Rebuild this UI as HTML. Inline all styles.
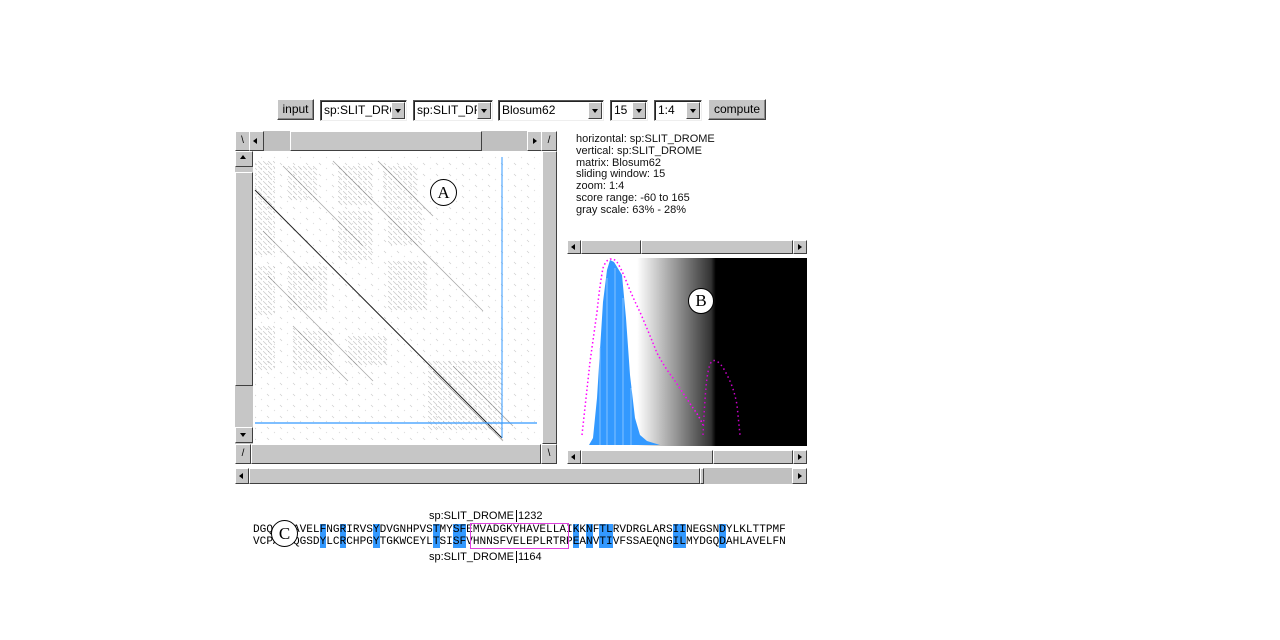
<!DOCTYPE html>
<html><head><meta charset="utf-8"><style>
*{box-sizing:border-box;margin:0;padding:0}
body{width:1280px;height:640px;background:#fff;position:relative;overflow:hidden;font-family:"Liberation Sans",sans-serif;font-size:11px;color:#000}
.a{position:absolute}
.btn{position:absolute;background:#c6c6c6;border:1px solid;border-color:#fff #404040 #404040 #fff;box-shadow:inset -1px -1px 0 #888;font-size:12px;text-align:center;line-height:18px;height:21px}
.sel{position:absolute;height:21px;background:#fff;border:1px solid;border-color:#555 #eee #eee #555;box-shadow:inset 1px 1px 0 #222;font-size:12px;line-height:18px;padding-left:3px;overflow:hidden;white-space:nowrap}
.sel i{position:absolute;right:1px;top:1px;width:14px;height:17px;background:#c6c6c6;border:1px solid;border-color:#fff #404040 #404040 #fff}
.sel i:after{content:"";position:absolute;left:3px;top:6px;border:3.5px solid transparent;border-top:4px solid #000}
.g{position:absolute;background:#c6c6c6;border:1px solid;border-color:#fff #404040 #404040 #fff}
.tr{position:absolute;background:#c6c6c6}
.lbl{position:absolute;font-size:11px;line-height:11px}
.seq{position:absolute;font-family:"Liberation Mono",monospace;font-size:11.1px;line-height:12px;white-space:pre;letter-spacing:0}
.h{background:#3399ff}
.info{position:absolute;left:576px;top:134px;font-size:11px;line-height:11.8px;color:#111}
.circ{position:absolute;border:1px solid #000;border-radius:50%;background:#fff;font-family:"Liberation Serif",serif;font-size:17px;text-align:center}
.ar{position:absolute;width:0;height:0;border:3px solid transparent}
</style></head><body>

<div class="btn" style="left:277px;top:99px;width:37px">input</div>
<div class="sel" style="left:320px;top:100px;width:87px">sp:SLIT_DRO<i></i></div>
<div class="sel" style="left:413px;top:100px;width:80px">sp:SLIT_DR<i></i></div>
<div class="sel" style="left:498px;top:100px;width:106px">Blosum62<i></i></div>
<div class="sel" style="left:610px;top:100px;width:38px">15<i></i></div>
<div class="sel" style="left:654px;top:100px;width:48px">1:4<i></i></div>
<div class="btn" style="left:708px;top:99px;width:58px">compute</div>

<!-- dotplot panel -->
<div class="tr" style="left:235px;top:131px;width:322px;height:333px"></div>
<div class="g" style="left:235px;top:131px;width:15px;height:20px;font-size:10px;text-align:center;line-height:17px">\</div>
<div class="g" style="left:249px;top:131px;width:15px;height:20px"></div><div class="ar" style="left:253px;top:138px;border-right:4px solid #000;border-left:0"></div>
<div class="tr" style="left:264px;top:131px;width:264px;height:20px;background:#c0c0c0"></div>
<div class="g" style="left:290px;top:131px;width:192px;height:20px"></div>
<div class="g" style="left:527px;top:131px;width:15px;height:20px"></div><div class="ar" style="left:533px;top:138px;border-left:4px solid #000;border-right:0"></div>
<div class="g" style="left:541px;top:131px;width:16px;height:20px;font-size:10px;text-align:center;line-height:17px">/</div>
<div class="g" style="left:235px;top:151px;width:18px;height:16px"></div><div class="ar" style="left:240px;top:155px;border-bottom:4px solid #000;border-top:0"></div>
<div class="g" style="left:235px;top:172px;width:18px;height:214px"></div>
<div class="g" style="left:235px;top:427px;width:18px;height:16px"></div><div class="ar" style="left:240px;top:433px;border-top:4px solid #000;border-bottom:0"></div>
<div class="g" style="left:542px;top:151px;width:15px;height:293px"></div>
<div class="g" style="left:235px;top:444px;width:16px;height:20px;font-size:10px;text-align:center;line-height:17px">/</div>
<div class="g" style="left:251px;top:444px;width:290px;height:20px"></div>
<div class="g" style="left:541px;top:444px;width:16px;height:20px;font-size:10px;text-align:center;line-height:17px">\</div>

<svg class="a" style="left:253px;top:151px" width="289" height="293">
<defs>
<pattern id="p" width="5" height="5" patternUnits="userSpaceOnUse"><line x1="0" y1="0" x2="4" y2="4" stroke="#888" stroke-width="0.7"/></pattern>
<pattern id="q" width="13" height="11" patternUnits="userSpaceOnUse"><line x1="1" y1="1" x2="3" y2="3" stroke="#ccc" stroke-width="0.6"/><line x1="8" y1="6" x2="9" y2="7" stroke="#d4d4d4" stroke-width="0.6"/></pattern>
</defs>
<rect width="289" height="293" fill="#fff"/>
<rect x="2" y="4" width="285" height="285" fill="url(#q)"/>
<g fill="url(#p)" opacity="0.45">
<rect x="2" y="10" width="20" height="45"/><rect x="35" y="15" width="30" height="35"/><rect x="85" y="15" width="35" height="40"/><rect x="130" y="15" width="35" height="40"/>
<rect x="2" y="55" width="20" height="50"/><rect x="85" y="60" width="35" height="50"/><rect x="135" y="55" width="35" height="40"/>
<rect x="2" y="115" width="20" height="50"/><rect x="35" y="115" width="40" height="45"/><rect x="135" y="110" width="40" height="50"/>
<rect x="2" y="175" width="20" height="45"/><rect x="40" y="180" width="40" height="40"/><rect x="95" y="185" width="40" height="30"/>
<rect x="175" y="210" width="75" height="70"/>
</g>
<g stroke="#555" stroke-width="0.8" opacity="0.5">
<line x1="30" y1="15" x2="110" y2="95"/><line x1="80" y1="10" x2="230" y2="160"/><line x1="125" y1="10" x2="180" y2="65"/>
<line x1="10" y1="80" x2="60" y2="130"/><line x1="15" y1="125" x2="120" y2="230"/><line x1="40" y1="175" x2="95" y2="230"/>
<line x1="180" y1="220" x2="250" y2="290"/><line x1="200" y1="215" x2="260" y2="275"/>
</g>
<line x1="2" y1="39" x2="249" y2="287" stroke="#222" stroke-width="1"/>
<line x1="249" y1="6" x2="249" y2="287" stroke="#3399ff" stroke-width="1"/>
<line x1="2" y1="272" x2="284" y2="272" stroke="#3399ff" stroke-width="1.2"/>
</svg>
<div class="circ" style="left:430px;top:179px;width:27px;height:27px;line-height:25px">A</div>

<!-- bottom scroll -->
<div class="tr" style="left:235px;top:468px;width:572px;height:16px;background:#c0c0c0"></div>
<div class="g" style="left:235px;top:468px;width:14px;height:16px"></div><div class="ar" style="left:239px;top:473px;border-right:4px solid #000;border-left:0"></div>
<div class="g" style="left:249px;top:468px;width:451px;height:16px"></div>
<div class="g" style="left:700px;top:468px;width:4px;height:16px"></div>
<div class="g" style="left:792px;top:468px;width:15px;height:16px"></div><div class="ar" style="left:798px;top:473px;border-left:4px solid #000;border-right:0"></div>

<div class="info">horizontal: sp:SLIT_DROME<br>vertical: sp:SLIT_DROME<br>matrix: Blosum62<br>sliding window: 15<br>zoom: 1:4<br>score range: -60 to 165<br>gray scale: 63% - 28%</div>

<!-- histogram scroll top -->
<div class="tr" style="left:567px;top:240px;width:240px;height:14px;background:#c0c0c0"></div>
<div class="g" style="left:567px;top:240px;width:14px;height:14px"></div><div class="ar" style="left:571px;top:244px;border-right:4px solid #000;border-left:0"></div>
<div class="g" style="left:581px;top:240px;width:60px;height:14px"></div>
<div class="g" style="left:641px;top:240px;width:152px;height:14px"></div>
<div class="g" style="left:793px;top:240px;width:14px;height:14px"></div><div class="ar" style="left:798px;top:244px;border-left:4px solid #000;border-right:0"></div>

<svg class="a" style="left:567px;top:258px" width="240" height="188">
<defs><linearGradient id="gr" x1="0" x2="1"><stop offset="0" stop-color="#fff"/><stop offset="0.292" stop-color="#fff"/><stop offset="0.45" stop-color="#999"/><stop offset="0.6" stop-color="#333"/><stop offset="0.62" stop-color="#000"/><stop offset="1" stop-color="#000"/></linearGradient></defs>
<rect width="240" height="188" fill="url(#gr)"/>
<path d="M22 187 L26 180 L30 140 L36 44 L40 12 L43 2 L47 4 L55 17 L59 60 L63 117 L68 160 L73 177 L80 183 L93 187 Z" fill="#3399ff"/>
<g stroke="#9cf" stroke-width="0.8"><line x1="33" y1="90" x2="33" y2="187"/><line x1="40" y1="20" x2="40" y2="187"/><line x1="48" y1="10" x2="48" y2="187"/><line x1="56" y1="40" x2="56" y2="187"/><line x1="64" y1="130" x2="64" y2="187"/></g>
<path d="M15 177 Q19 140 23 104 Q27 75 30 54 Q33 25 36 10 Q39 2 43 1 Q48 1 50 4 Q55 12 60 25 Q66 40 73 54 Q82 75 90 95 Q98 110 106 120 Q116 135 126 150 Q132 158 136 167" fill="none" stroke="#f0f" stroke-width="1.5" stroke-dasharray="1.5 2.5"/>
<path d="M136 177 Q138 135 140 120 Q142 106 145 103 Q152 100 160 117 Q167 130 170 147 L173 177" fill="none" stroke="#c0c" stroke-width="1.5" stroke-dasharray="1.5 3"/>
</svg>
<div class="circ" style="left:688px;top:288px;width:26px;height:26px;line-height:24px">B</div>

<div class="tr" style="left:567px;top:450px;width:240px;height:14px;background:#c0c0c0"></div>
<div class="g" style="left:567px;top:450px;width:14px;height:14px"></div><div class="ar" style="left:571px;top:454px;border-right:4px solid #000;border-left:0"></div>
<div class="g" style="left:581px;top:450px;width:132px;height:14px"></div>
<div class="g" style="left:713px;top:450px;width:80px;height:14px"></div>
<div class="g" style="left:793px;top:450px;width:14px;height:14px"></div><div class="ar" style="left:798px;top:454px;border-left:4px solid #000;border-right:0"></div>

<!-- sequences -->
<div class="lbl" style="left:429px;top:511px">sp:SLIT_DROME<span style="border-left:1px solid #000;margin-left:2px;padding-left:1px">1232</span></div>
<div class="seq" style="left:253px;top:524px">DGQAAAAVEL<span class="h">F</span>NG<span class="h">R</span>IRVS<span class="h">Y</span>DVGNHPVS<span class="h">T</span>MY<span class="h">SF</span>EMVADGKYHAVELLAI<span class="h">K</span>K<span class="h">N</span>F<span class="h">TL</span>RVDRGLARS<span class="h">II</span>NEGSN<span class="h">D</span>YLKLTTPMF</div>
<div class="seq" style="left:253px;top:536px">VCPAAAQGSD<span class="h">Y</span>LC<span class="h">R</span>CHPG<span class="h">Y</span>TGKWCEYL<span class="h">T</span>SI<span class="h">SF</span>VHNNSFVELEPLRTRP<span class="h">E</span>A<span class="h">N</span>V<span class="h">TI</span>VFSSAEQNG<span class="h">IL</span>MYDGQ<span class="h">D</span>AHLAVELFN</div>
<div class="a" style="left:470px;top:523px;width:99px;height:26px;border:1px solid #e040e0"></div>
<div class="circ" style="left:271px;top:520px;width:27px;height:27px;line-height:25px">C</div>
<div class="lbl" style="left:429px;top:552px">sp:SLIT_DROME<span style="border-left:1px solid #000;margin-left:2px;padding-left:1px">1164</span></div>
</body></html>
